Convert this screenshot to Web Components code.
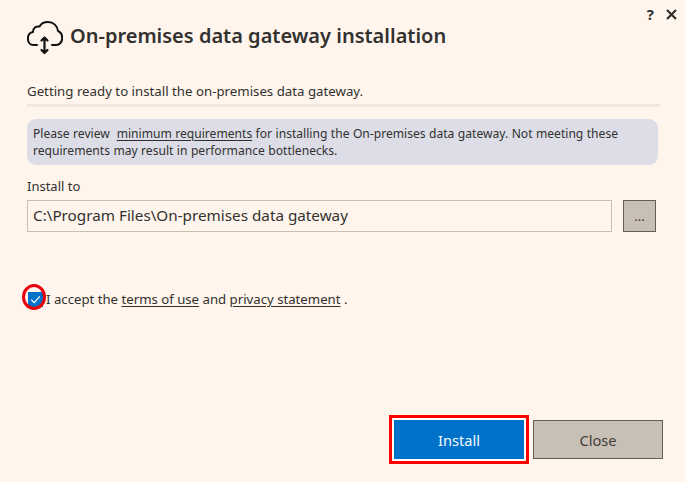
<!DOCTYPE html>
<html lang="en">
<head>
<meta charset="utf-8">
<title>On-premises data gateway installation</title>
<style>
  html, body { margin: 0; padding: 0; background: #fff5ec; }
  body { font-family: "Noto Sans", "Open Sans", sans-serif; color: #323130; }
</style>
</head>
<body>

<gateway-dialog>
  <gateway-header slot="header">On-premises data gateway installation</gateway-header>
  <status-line slot="status">Getting ready to install the on-premises data gateway.</status-line>
  <info-note slot="note">Please review &nbsp;<a href="#">minimum requirements</a> for installing the On-premises data gateway. Not meeting these<br>requirements may result in performance bottlenecks.</info-note>
  <path-field slot="path" label="Install to" value="C:\Program Files\On-premises data gateway"></path-field>
  <accept-terms slot="terms">I accept the <a href="#">terms of use</a> and <a href="#">privacy statement</a> .</accept-terms>
  <action-button slot="actions" variant="primary" marked>Install</action-button>
  <action-button slot="actions">Close</action-button>
</gateway-dialog>

<script>
  function shadow(el, html) {
    el.attachShadow({ mode: 'open' }).innerHTML = html;
  }

  class GatewayDialog extends HTMLElement {
    connectedCallback() {
      shadow(this, `
        <style>
          :host { display: flex; flex-direction: column; width: 686px; height: 482px; box-sizing: border-box; padding: 7px 23px 18px 27px; }
          .top { display: flex; justify-content: flex-end; gap: 12px; height: 14px; margin-right: -14px; align-items: center; }
          .help { font-size: 15px; font-weight: 700; line-height: 14px; }
          .top svg { display: block; }
          .grow { flex: 1; }
          .actions { display: flex; justify-content: flex-end; align-items: center; gap: 4px; }
        </style>
        <div class="top">
          <span class="help">?</span>
          <svg width="11" height="11" viewBox="0 0 11 11"><path d="M1 1l9 9M10 1l-9 9" stroke="#323130" stroke-width="2.2" fill="none"/></svg>
        </div>
        <slot name="header"></slot>
        <slot name="status"></slot>
        <slot name="note"></slot>
        <slot name="path"></slot>
        <slot name="terms"></slot>
        <div class="grow"></div>
        <div class="actions"><slot name="actions"></slot></div>`);
    }
  }

  class GatewayHeader extends HTMLElement {
    connectedCallback() {
      shadow(this, `
        <style>
          :host { display: flex; align-items: center; gap: 7px; height: 34px; }
          svg { display: block; flex: none; }
          h1 { margin: -4px 0 0; font-size: 20px; font-weight: 600; line-height: 28px; color: #323130; white-space: nowrap; }
        </style>
        <svg width="36" height="34" viewBox="0 0 36 34" fill="none" stroke="#111" stroke-width="2" stroke-linecap="round" stroke-linejoin="round">
          <path d="M10 24H6.5C3 24 .9 21 .9 17.5C.9 14 3 11.5 6 11C6 7 9 5 12.5 5.6C14 2.5 17.5 1 21 1C26.5 1 30.5 5 31 10C33.5 11 35.2 13.5 35.2 17C35.2 21 32.5 24 29 24H25"/>
          <path d="M17.5 16.5V32M14.5 19.5L17.5 16.5L20.5 19.5M14.5 29L17.5 32L20.5 29" stroke-width="2.2"/>
        </svg>
        <h1><slot></slot></h1>`);
    }
  }

  class StatusLine extends HTMLElement {
    connectedCallback() {
      shadow(this, `
        <style>
          :host { display: block; margin-top: 27px; padding-bottom: 4px; border-bottom: 3px solid #f1e9e1; font-size: 13.25px; line-height: 18px; width: 633px; }
        </style>
        <slot></slot>`);
    }
  }

  class InfoNote extends HTMLElement {
    connectedCallback() {
      shadow(this, `
        <style>
          :host { display: block; margin-top: 12px; box-sizing: border-box; width: 631px; height: 46px; padding: 6px 6px; background: #dcdde6; border-radius: 9px; font-size: 12.1px; word-spacing: .3px; line-height: 17px; white-space: nowrap; }
          ::slotted(a) { color: inherit; text-decoration: underline; text-underline-offset: 2px; }
        </style>
        <slot></slot>`);
    }
  }

  class PathField extends HTMLElement {
    connectedCallback() {
      shadow(this, `
        <style>
          :host { display: block; margin-top: 12px; }
          label { display: block; font-size: 13px; line-height: 18px; margin-bottom: 5px; }
          .row { display: flex; gap: 11px; width: 629px; }
          .box { flex: 1; box-sizing: border-box; height: 32px; border: 1px solid #c8bfb5; padding: 0 5px; font-size: 15.25px; line-height: 29px; white-space: nowrap; }
          button { box-sizing: border-box; width: 33px; height: 32px; padding: 0; border: 1px solid #605e5c; background: #c8bfb5; color: #323130; font: inherit; font-size: 13px; }
        </style>
        <label></label>
        <div class="row"><div class="box"></div><button>...</button></div>`);
      this.shadowRoot.querySelector('label').textContent = this.getAttribute('label');
      this.shadowRoot.querySelector('.box').textContent = this.getAttribute('value');
    }
  }

  class AcceptTerms extends HTMLElement {
    connectedCallback() {
      shadow(this, `
        <style>
          :host { display: flex; align-items: center; gap: 3px; margin-top: 59px; margin-left: 1px; height: 16px; font-size: 13.2px; line-height: 18px; position: relative; }
          .check { flex: none; width: 15px; height: 15px; background: #0072c9; display: block; }
          .ring { position: absolute; left: -6px; top: -7px; box-sizing: border-box; width: 24px; height: 26px; border: 3px solid #e8000b; border-radius: 50%; }
          ::slotted(a) { color: inherit; text-decoration: underline; text-underline-offset: 2px; }
        </style>
        <svg class="check" viewBox="0 0 15 15"><path d="M3.2 7.8L6.2 10.6L11.8 4.4" stroke="#fff" stroke-width="1.2" fill="none"/></svg>
        <span><slot></slot></span>
        <div class="ring"></div>`);
    }
  }

  class ActionButton extends HTMLElement {
    connectedCallback() {
      const primary = this.getAttribute('variant') === 'primary';
      shadow(this, `
        <style>
          :host { display: block; }
          .mark { ${this.hasAttribute('marked') ? 'border: 3px solid #f00; padding: 2px; background: #fff;' : ''} }
          button { display: block; box-sizing: border-box; width: 130px; height: 39px; padding: 0; font: inherit; font-size: 14.6px;
            ${primary ? 'background: #0072c9; color: #f3f8fc; border: 1px solid #0072c9;' : 'background: #c8bfb5; color: #3f3d3b; border: 1px solid #605e5c;'} }
        </style>
        <div class="mark"><button><slot></slot></button></div>`);
    }
  }

  customElements.define('gateway-dialog', GatewayDialog);
  customElements.define('gateway-header', GatewayHeader);
  customElements.define('status-line', StatusLine);
  customElements.define('info-note', InfoNote);
  customElements.define('path-field', PathField);
  customElements.define('accept-terms', AcceptTerms);
  customElements.define('action-button', ActionButton);
</script>
</body>
</html>
